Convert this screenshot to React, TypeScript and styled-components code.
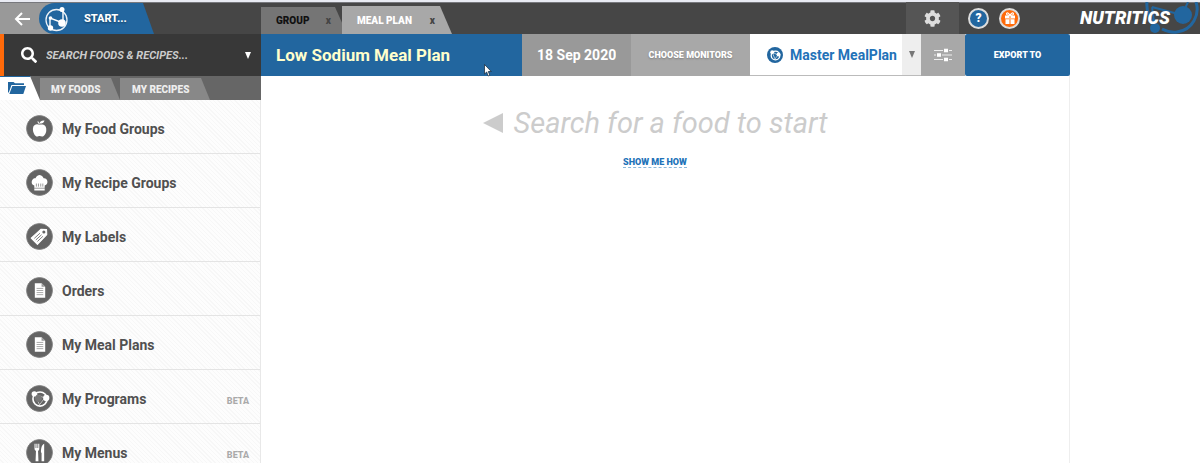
import React from "react";
import styled, { createGlobalStyle } from "styled-components";
import { FaSearch, FaCog } from "react-icons/fa";

const BLUE = "#22669f";

const GlobalStyle = createGlobalStyle`
  * { box-sizing: border-box; }
  body { margin: 0; background: #fff; font-family: Roboto, "Liberation Sans", sans-serif; overflow: hidden; }
  button, input, select { font: inherit; border: 0; margin: 0; padding: 0; border-radius: 0; background: none; color: inherit; outline: 0; }
  svg { display: block; flex: none; }
`;

const Page = styled.div`
  display: flex;
  flex-direction: column;
  height: 100vh;
  overflow: hidden;
`;

const TopBar = styled.header`
  display: flex;
  flex: none;
  height: 34px;
  border-top: 2px solid #e9ebf3;
  background: #464646;
  box-shadow: inset 0 1px 0 #77787d;
`;

const StartArea = styled.div`
  display: flex;
  flex: none;
  width: 261px;
  padding-top: 1px;
`;

const BackButton = styled.button`
  display: flex;
  align-items: center;
  width: 58px;
  height: 31px;
  padding-left: 14px;
  background: #999;
  color: #fff;
`;

const StartButton = styled.button`
  display: flex;
  align-items: center;
  gap: 14px;
  width: 115px;
  height: 31px;
  margin-left: -19px;
  padding-left: 4px;
  border-radius: 16px 0 0 16px;
  background: ${BLUE};
  clip-path: polygon(0 0, 104px 0, 100% 100%, 0 100%);
  color: #fff;
  font-size: 11px;
  font-weight: 800;
  text-shadow: 0 1px 2px rgba(0, 0, 0, 0.4);
`;

const DocTabs = styled.nav`
  display: flex;
  flex: 1;
  align-items: flex-end;
`;

const DocTab = styled.div<{ $active?: boolean }>`
  display: flex;
  align-items: center;
  justify-content: space-between;
  width: ${(p) => (p.$active ? 110 : 86)}px;
  height: ${(p) => (p.$active ? 28 : 27)}px;
  margin-left: ${(p) => (p.$active ? -5 : 0)}px;
  padding: 0 ${(p) => (p.$active ? 17 : 16)}px 0 15px;
  background: ${(p) => (p.$active ? "#a8a8a8" : "#757575")};
  clip-path: polygon(0 0, calc(100% - 12px) 0, 100% 100%, 0 100%);
  color: ${(p) => (p.$active ? "#fff" : "#111")};
  font-size: 10px;
  text-shadow: ${(p) => (p.$active ? "0 1px 2px rgba(0, 0, 0, 0.4)" : "none")};
`;

const TabName = styled.button`
  font-weight: 900;
`;

const CloseTab = styled.button`
  color: #444;
  font-size: 10px;
  font-weight: 900;
`;

const TopActions = styled.div`
  display: flex;
  flex: none;
  align-items: center;
`;

const SettingsButton = styled.button`
  display: flex;
  align-items: center;
  justify-content: center;
  width: 53px;
  height: 100%;
  margin-right: 9px;
  background: #555;
  color: #ddd;
`;

const RoundButton = styled.button<{ $color: string }>`
  display: flex;
  align-items: center;
  justify-content: center;
  width: 21px;
  height: 21px;
  margin-right: 10px;
  border: 2px solid #ddd;
  border-radius: 50%;
  background: ${(p) => p.$color};
  color: #fff;
  font-size: 12px;
  font-weight: 900;
  line-height: 16px;
`;

const Brand = styled.a`
  position: relative;
  display: flex;
  align-items: center;
  width: 130px;
  height: 100%;
  margin-left: 40px;
  padding-left: 10px;
  overflow: hidden;
  color: #fff;
  font-size: 18px;
  font-style: italic;
  font-weight: 900;
  line-height: 30px;
  text-decoration: none;
`;

const BrandMark = styled.svg`
  position: absolute;
  top: 0;
  right: 0;
`;

const BrandName = styled.span`
  position: relative;
`;

const Body = styled.div`
  display: grid;
  flex: 1;
  grid-template-columns: 261px 1fr 130px;
  min-height: 0;
`;

const Sidebar = styled.aside`
  display: flex;
  flex-direction: column;
  min-height: 0;
  overflow: hidden;
`;

const SearchBar = styled.label`
  display: flex;
  flex: none;
  align-items: center;
  gap: 9px;
  height: 42px;
  padding: 0 10px 0 17px;
  border-left: 4px solid #ff6a0a;
  background: #383838;
  color: #fff;
`;

const SearchInput = styled.input`
  flex: 1;
  min-width: 0;
  font-size: 11px;
  font-style: italic;
  font-weight: 700;
  &::placeholder { color: #ccc; opacity: 1; }
`;

const Caret = styled.svg.attrs({ width: 6, height: 7, viewBox: "0 0 6 7", "aria-hidden": true })`
  fill: currentColor;
`;

const SideTabs = styled.nav`
  display: flex;
  flex: none;
  height: 24px;
  background: #666;
`;

const FolderTab = styled.button`
  width: 40px;
  padding: 0 0 2px 8px;
  border-top: 1px solid ${BLUE};
  background: #fff;
  clip-path: polygon(0 0, 30px 0, 100% 100%, 0 100%);
`;

const SideTab = styled.button<{ $width: number }>`
  width: ${(p) => p.$width}px;
  height: 22px;
  margin-top: 2px;
  padding-left: ${(p) => (p.$width > 80 ? 12 : 11)}px;
  background: #888;
  clip-path: polygon(0 0, calc(100% - 9px) 0, 100% 100%, 0 100%);
  color: #eee;
  font-size: 10px;
  font-weight: 900;
  text-align: left;
`;

const GroupList = styled.ul`
  flex: 1;
  min-height: 0;
  margin: 0;
  padding: 0;
  overflow: hidden;
  border-right: 1px solid #e8e8e8;
  background: repeating-linear-gradient(45deg, #fdfdfd 0 2px, #f7f7f7 2px 3px);
  list-style: none;
`;

const GroupItem = styled.li`
  height: 54px;
  border-bottom: 1px solid #e4e4e4;
`;

const GroupButton = styled.button`
  display: flex;
  align-items: center;
  gap: 9px;
  width: 100%;
  height: 100%;
  padding: 4px 11px 0 26px;
  color: #505050;
  font-size: 14px;
  font-weight: 700;
`;

const Beta = styled.span`
  margin-left: auto;
  padding-top: 4px;
  color: #aaa;
  font-size: 9px;
  font-weight: 800;
`;

const Workspace = styled.main`
  min-width: 0;
  border-right: 1px solid #eee;
`;

const Toolbar = styled.div`
  position: relative;
  display: flex;
  height: 42px;
  margin-right: -1px;
  color: #fff;
`;

const Title = styled.h1`
  flex: 1;
  margin: 0;
  padding-left: 15px;
  background: ${BLUE};
  color: #ffffcc;
  font-size: 17px;
  font-weight: 700;
  line-height: 42px;
`;

const DateField = styled.div`
  flex: none;
  width: 109px;
  padding: 0 15px;
  background: #999;
`;

const DateInput = styled.input`
  width: 100%;
  height: 42px;
  font-size: 14px;
  font-weight: 700;
`;

const ToolButton = styled.button<{ $width: number; $blue?: boolean }>`
  display: flex;
  flex: none;
  align-items: center;
  justify-content: center;
  width: ${(p) => p.$width}px;
  background: ${(p) => (p.$blue ? BLUE : "#a8a8a8")};
  border-radius: ${(p) => (p.$blue ? 2 : 0)}px;
  font-size: 9px;
  font-weight: 900;
  text-shadow: ${(p) => (p.$blue ? "none" : "0 1px 2px rgba(0, 0, 0, 0.25)")};
`;

const PlanPicker = styled.label`
  display: flex;
  flex: none;
  align-items: center;
  width: 171px;
  padding-left: 17px;
  border-bottom: 1px solid #bbb;
  background: #fff;
  color: #2272b8;
`;

const PlanSelect = styled.select`
  flex: 1;
  min-width: 0;
  margin-left: 7px;
  appearance: none;
  font-size: 14px;
  font-weight: 700;
`;

const PickerArrow = styled.span`
  display: flex;
  align-items: center;
  justify-content: center;
  width: 19px;
  height: 100%;
  background: #eee;
  color: #777;
`;

const Pointer = styled.svg`
  position: absolute;
  top: 30px;
  left: 223px;
`;

const EmptyState = styled.section`
  display: flex;
  flex-direction: column;
  align-items: center;
  gap: 17px;
  padding: 30px 20px 0 0;
`;

const Hint = styled.p`
  display: flex;
  align-items: center;
  gap: 11px;
  margin: 0;
  color: #ccc;
  font-size: 29px;
  font-style: italic;
  line-height: 34px;
`;

const HelpLink = styled.a`
  border-bottom: 1px dashed #8ab8dc;
  color: #2272b8;
  font-size: 9px;
  font-weight: 900;
  line-height: 10px;
  text-decoration: none;
`;

function DownCaret() {
  return (
    <Caret>
      <path d="M0 0h6L3 7z" />
    </Caret>
  );
}

function Network() {
  return (
    <svg width="27" height="28" viewBox="0 0 27 28" fill="none" stroke="#fff">
      <circle cx="13.500" cy="15" r="10.500" strokeWidth="1.300" opacity=".9" />
      <path d="M7 23V13l13 5V5" strokeWidth="1.400" />
      <g fill="#fff" stroke="none">
        <circle cx="19" cy="4.500" r="2.500" />
        <circle cx="7.500" cy="13" r="1.800" />
        <circle cx="19" cy="18" r="3.800" />
        <circle cx="7.500" cy="23" r="2.700" />
      </g>
    </svg>
  );
}

function Folder() {
  return (
    <svg width="18" height="12" viewBox="0 0 18 12" fill={BLUE}>
      <path d="M0 0h5.500l1.500 1.300h9V3H3.500L.8 10.500H0z" />
      <path d="M4.300 4H18l-2.700 8H1.300z" />
    </svg>
  );
}

function Gift() {
  return (
    <svg width="12" height="13" viewBox="0 0 12 13">
      <path d="M6 3.500C4.800.8 2.700.2 2.500 1.700 2.400 3 4.200 3.400 6 3.500c1.800-.1 3.600-.5 3.500-1.800C9.300.2 7.200.8 6 3.500z" fill="none" stroke="#fff" strokeWidth="1.100" />
      <path d="M1 3.500h4v3H1zM7 3.500h4v3H7zM1.500 7.200H5V12H1.500zM7 7.200h3.500V12H7zM5.500 3.500h1V12h-1z" fill="#fff" />
    </svg>
  );
}

function PlanMark() {
  return (
    <svg width="16" height="16" viewBox="0 0 16 16">
      <circle cx="8" cy="8" r="8" fill={BLUE} />
      <circle cx="8.500" cy="8.500" r="4.300" fill="none" stroke="#fff" strokeWidth="1.300" />
      <circle cx="5.200" cy="5.200" r="1.900" fill="#fff" />
      <circle cx="11.500" cy="7.500" r="2" fill="#fff" />
      <path d="M5 5l6 3-3 4z" fill="none" stroke="#fff" strokeWidth=".6" />
    </svg>
  );
}

function Sliders() {
  return (
    <svg width="18" height="14" viewBox="0 0 18 14">
      <path d="M0 2.500h18M0 7h18M0 11.500h18" stroke="#eee" strokeWidth="1" />
      <path d="M9 .5h6v4H9zM2 5h6v4H2zM9 9.500h6v4H9z" fill="#a8a8a8" />
      <path d="M10 .8h4v3.400h-4zM3 5.300h4v3.400H3zM10 9.800h4v3.400h-4z" fill="#fff" />
    </svg>
  );
}

type Kind = "apple" | "chef" | "tag" | "doc" | "program" | "menu";

const glyphs: Record<Kind, React.ReactNode> = {
  apple: (
    <g fill="#fff">
      <path d="M13 9.500c-2-1.200-5.800-.8-6.300 3.200-.4 3.600 1.800 8 4.100 8.100.9 0 1.400-.5 2.300-.5s1.500.5 2.400.5c1.500 0 3.600-2.300 4-5.500.4-3.300-.9-5.200-2.600-5.900-1.400-.5-2.700-.4-3.900.1z" />
      <path d="M13 8.300c0-2 1.700-3.300 4.800-3.100-.5 2.300-2.100 3.100-4.800 3.100zM12.500 9L10.800 6.500l1-.5L13.300 9z" />
    </g>
  ),
  chef: (
    <g>
      <path d="M8 16c-2.500-1-3-3.200-2.200-5 .8-1.700 2.200-2.200 3.300-2C10 6.300 12 5.700 13 5.700s3.200.6 4 3.300c1.500-.2 2.800.5 3.400 2 .8 2-.1 4-2.400 5v4.800H8z" fill="#fff" />
      <path d="M7.500 18.500h11M10 17v-3M12 17v-3M14.200 17v-3M16.200 17v-3" stroke="#777" strokeWidth=".7" />
    </g>
  ),
  tag: (
    <g>
      <path d="M5 14.500L14.500 6l5.300.2.2 5L11 20.700z" fill="#fff" stroke="#fff" strokeLinejoin="round" />
      <circle cx="17.200" cy="8.700" r="1.500" fill="#646464" />
      <path d="M8 14.800l5.500-5M9.500 16.300l5.500-5M11 17.800l5.300-5" stroke="#777" strokeWidth=".9" />
    </g>
  ),
  doc: (
    <g>
      <path d="M8.500 6h6.500l3.500 3.300V20h-10z" fill="#fff" />
      <path d="M15 6v3.300h3.500z" fill="#999" />
      <path d="M10.200 11h6.400M10.200 13h6.400M10.200 15h6.400M10.200 17h6.400" stroke="#999" strokeWidth=".8" />
    </g>
  ),
  program: (
    <g fill="none" stroke="#fff">
      <circle cx="13.500" cy="13.500" r="6.800" strokeWidth="1.600" />
      <path d="M8 8.500l10 4-5 6.500z" strokeWidth=".8" opacity=".7" />
      <circle cx="8" cy="8.500" r="2.600" fill="#fff" stroke="none" />
      <circle cx="19.500" cy="12.500" r="3" fill="#fff" stroke="none" />
      <circle cx="12" cy="13" r="3.300" fill="#777" stroke="none" />
    </g>
  ),
  menu: (
    <g fill="#fff">
      <path d="M8.200 4.500h1v4.200h.8V4.500h1v4.200h.8V4.500h1v5c0 1.200-.7 1.800-1.200 2L12 21.500H9.200L9.600 11.500c-.8-.3-1.400-1-1.400-2z" />
      <path d="M17.500 4.500V21.500H15v-8l-.6-.8c0-4 .8-7.200 3.100-8.200z" />
    </g>
  ),
};

function GroupIcon({ kind }: { kind: Kind }) {
  return (
    <svg width="27" height="27" viewBox="0 0 26 26">
      <circle cx="13" cy="13" r="12.500" fill="#646464" stroke="#808080" strokeWidth=".8" />
      {glyphs[kind]}
    </svg>
  );
}

const groups: { name: string; kind: Kind; beta?: boolean }[] = [
  { name: "My Food Groups", kind: "apple" },
  { name: "My Recipe Groups", kind: "chef" },
  { name: "My Labels", kind: "tag" },
  { name: "Orders", kind: "doc" },
  { name: "My Meal Plans", kind: "doc" },
  { name: "My Programs", kind: "program", beta: true },
  { name: "My Menus", kind: "menu", beta: true },
];

export default function App() {
  return (
    <Page>
      <GlobalStyle />
      <TopBar>
        <StartArea>
          <BackButton aria-label="Back">
            <svg width="16" height="14" viewBox="0 0 16 14" fill="none" stroke="#fff" strokeWidth="2">
              <path d="M16 7H2M8 1L2 7l6 6" />
            </svg>
          </BackButton>
          <StartButton>
            <Network />
            START...
          </StartButton>
        </StartArea>
        <DocTabs>
          <DocTab>
            <TabName>GROUP</TabName>
            <CloseTab>x</CloseTab>
          </DocTab>
          <DocTab $active>
            <TabName>MEAL PLAN</TabName>
            <CloseTab>x</CloseTab>
          </DocTab>
        </DocTabs>
        <TopActions>
          <SettingsButton aria-label="Settings">
            <FaCog size={17} />
          </SettingsButton>
          <RoundButton $color={BLUE}>?</RoundButton>
          <RoundButton $color="#ff6a0a" aria-label="Gifts">
            <Gift />
          </RoundButton>
          <Brand href="#">
            <BrandMark width="56" height="32" viewBox="0 0 56 32" fill="none" stroke={BLUE}>
              <path d="M3 0a27 27 0 0 0 8 22M52 0c4 12-3 28-19 30-6 1-11-1-15-3" strokeWidth="3" />
              <path d="M8 5l30 8L44 0M8 5l3 22" strokeWidth="2" />
              <circle cx="39" cy="13" r="9" fill={BLUE} stroke="none" />
              <circle cx="11" cy="26" r="5" fill={BLUE} stroke="none" />
            </BrandMark>
            <BrandName>NUTRITICS</BrandName>
          </Brand>
        </TopActions>
      </TopBar>
      <Body>
        <Sidebar>
          <SearchBar>
            <FaSearch size={16} />
            <SearchInput placeholder="SEARCH FOODS &amp; RECIPES..." aria-label="Search foods and recipes" />
            <DownCaret />
          </SearchBar>
          <SideTabs>
            <FolderTab aria-label="Folders">
              <Folder />
            </FolderTab>
            <SideTab $width={80}>MY FOODS</SideTab>
            <SideTab $width={90}>MY RECIPES</SideTab>
          </SideTabs>
          <GroupList>
            {groups.map((g) => (
              <GroupItem key={g.name}>
                <GroupButton>
                  <GroupIcon kind={g.kind} />
                  {g.name}
                  {g.beta && <Beta>BETA</Beta>}
                </GroupButton>
              </GroupItem>
            ))}
          </GroupList>
        </Sidebar>
        <Workspace>
          <Toolbar>
            <Title>Low Sodium Meal Plan</Title>
            <DateField>
              <DateInput aria-label="Plan date" defaultValue="18 Sep 2020" />
            </DateField>
            <ToolButton $width={119}>CHOOSE MONITORS</ToolButton>
            <PlanPicker>
              <PlanMark />
              <PlanSelect aria-label="Meal plan">
                <option>Master MealPlan</option>
              </PlanSelect>
              <PickerArrow>
                <DownCaret />
              </PickerArrow>
            </PlanPicker>
            <ToolButton $width={44} aria-label="Plan options">
              <Sliders />
            </ToolButton>
            <ToolButton $width={105} $blue>
              EXPORT TO
            </ToolButton>
            <Pointer width="8" height="13" viewBox="0 0 8 13">
              <path d="M.5.5v9.500l2.200-2 1.500 4 1.600-.7L4.300 7.500h3z" fill="#fff" stroke="#123" strokeWidth=".7" />
            </Pointer>
          </Toolbar>
          <EmptyState>
            <Hint>
              <svg width="20" height="20" viewBox="0 0 20 20">
                <path d="M0 10L20 0v20z" fill="#ccc" />
              </svg>
              Search for a food to start
            </Hint>
            <HelpLink href="#">SHOW ME HOW</HelpLink>
          </EmptyState>
        </Workspace>
      </Body>
    </Page>
  );
}
